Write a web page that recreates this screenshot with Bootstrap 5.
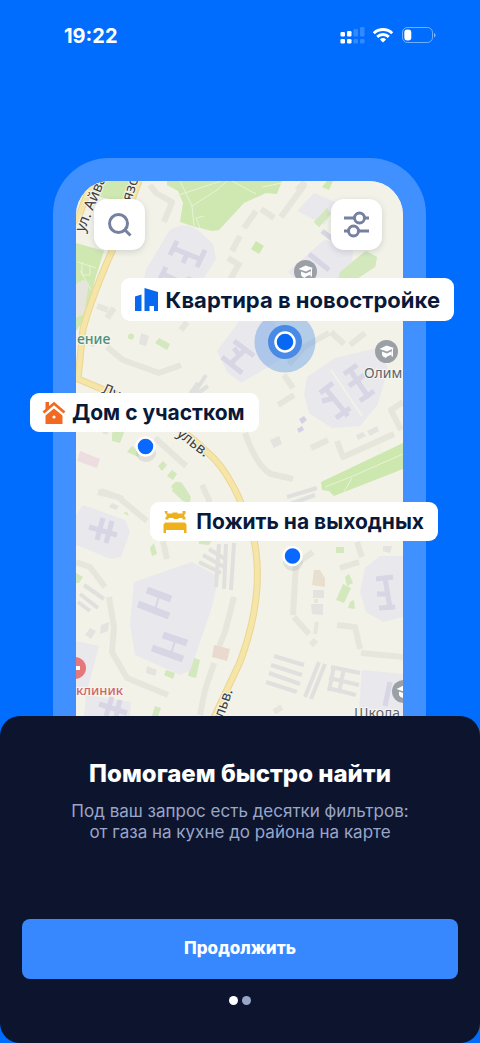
<!DOCTYPE html>
<html lang="ru">
<head>
<meta charset="utf-8">
<meta name="viewport" content="width=device-width, initial-scale=1">
<title>Помогаем быстро найти</title>
<link href="https://cdn.jsdelivr.net/npm/bootstrap@5.3.0/dist/css/bootstrap.min.css" rel="stylesheet">
<style>
  body { background: #006dff; font-family: Inter, "Noto Sans", sans-serif; }
  .status-bar { height: 158px; padding: 24px 44px 0 64px; color: #fff; }
  .status-time { font-size: 20px; line-height: 24px; }
  .stage { padding: 0 54px 0 53px; }
  .phone { background: #4090ff; border-radius: 56px 56px 0 0; padding: 23px 23px 0; }
  .map-screen { border-radius: 34px 34px 0 0; overflow: hidden; background: #f2f2e8; }
  .map-tools { top: 41px; left: 41px; right: 44px; }
  .tool-btn { width: 51px; height: 51px; border-radius: 13px; background: #fff; border: 0; box-shadow: 0 2px 6px rgba(60, 70, 90, .18); }
  .tag { background: #fff; color: #08193a; border-radius: 9px; height: 39px; font-size: 21px; line-height: 24px; font-weight: 700; white-space: nowrap; padding: 0 14px 0 12px; gap: 8px; }
  .tag-flat { top: 120px; right: -28px; height: 43px; font-size: 22px; gap: 6px; }
  .tag-house { top: 235px; left: -23px; gap: 6px; }
  .tag-weekend { top: 344px; right: -12px; }
  .sheet { background: #0d152e; border-radius: 20px; padding: 43px 22px 38px; }
  .sheet-title { font-size: 24px; line-height: 30px; font-weight: 800; color: #fff; margin-bottom: 12px; }
  .sheet-note { font-size: 17px; line-height: 21px; font-weight: 400; color: #9aa5c8; margin-bottom: 76px; }
  .next-btn { --bs-btn-color: #fff; --bs-btn-bg: #3787ff; --bs-btn-hover-color: #fff; --bs-btn-hover-bg: #2778f0; height: 60px; border-radius: 8px; font-size: 17px; font-weight: 800; }
  .dots { gap: 4px; margin-top: 17px; }
  .dot { width: 9px; height: 9px; border-radius: 50%; background: #9aa5c8; }
  .dot-on { background: #fff; }
</style>
</head>
<body class="min-vh-100 d-flex flex-column">

<header class="status-bar d-flex justify-content-between align-items-start">
  <div class="status-time fw-bold">19:22</div>
  <svg width="96" height="24" viewBox="340 24 96 24" aria-hidden="true">
    <g fill="#fff">
      <rect x="340.500" y="32" width="4.500" height="4.500" rx="1.300"/><rect x="347" y="31" width="4.500" height="5.500" rx="1.300"/>
      <rect x="340.500" y="39" width="4.500" height="4.500" rx="1.300"/><rect x="347" y="39" width="4.500" height="4.500" rx="1.300"/>
      <g opacity=".2"><rect x="353.500" y="29" width="4.500" height="7.500" rx="1.300"/><rect x="360" y="27" width="4.500" height="9.500" rx="1.300"/>
      <rect x="353.500" y="39" width="4.500" height="4.500" rx="1.300"/><rect x="360" y="39" width="4.500" height="4.500" rx="1.300"/></g>
    </g>
    <g fill="none" stroke="#fff" stroke-width="2.900">
      <path d="M373.800 33.200a13.200 13.200 0 0 1 18.400 0"/><path d="M377.200 36.900a8.300 8.300 0 0 1 11.600 0"/>
    </g>
    <path d="M383 42.600l-3.100-3.200a4.500 4.500 0 0 1 6.200 0z" fill="#fff"/>
    <rect x="402.500" y="27.500" width="30" height="15" rx="5" fill="none" stroke="#fff" stroke-opacity=".45"/>
    <path d="M434 33v4.500q1.500-.5 1.500-2.200T434 33z" fill="#fff" opacity=".5"/>
    <rect x="404.300" y="29.500" width="7" height="11" rx="3" fill="#fff"/>
  </svg>
</header>

<main class="flex-grow-1 d-flex flex-column">
  <section class="stage">
    <div class="phone position-relative">
      <div class="map-screen">
        <svg class="d-block w-100" viewBox="76 181 327 535" role="img" aria-label="Карта района">
          <rect x="76" y="181" width="327" height="535" fill="#f2f2e8"/>
          <!-- parks -->
          <g fill="#cfe8b2">
            <path d="M94 181h43l-9 22-28-6-14-6z"/>
            <path d="M76 243l28 8-8 25-11 43-9 12z"/>
            <path d="M167 181h115l-5 13-11-1-22 10-25 27-7 1-20-5-12-4 3-19-5-12-11-6z"/>
            <path d="M327 181l6 0-4 9-7-3zM314 222l13-14 4 6-12 13zM340 272l26-21 11 6-2 10-17 11-20 2zM256 241l8 5-5 8-8-5z"/>
          </g>
          <g fill="#d3e8bd">
            <path d="M155 343l4-5 11 6-3 6zM128 336a3 3 0 1 1 6 1 3 3 0 0 1-6-1zM112 434l2-7 11 3-5 13-8-2zM127 452l5-6 8 6-2 5zM158 466l5-5 4 4-5 6zM167 476l5-6 5 4-4 6zM171 487q4-8 11-4l9 14q-4 6-9 3z"/>
            <path d="M321 482l82-39v26l-69 27-5-5-7-1z" fill="#cde8ae"/>
            <path d="M171 490h10l10 9-2 4-6-2zM150 548l4-5 3 11-5 2zM199 540h13l-3 5-10-1zM195 582l13 4-3 7-12-3zM187 600q7-6 15-1 1 8-10 28-6 6-13-2-1-6 8-25zM192 657l8 3-4 18-8-2zM166 670l9 3-2 6-9-4zM155 706l6 2-3 8h-6zM76 573l7 4-4 6h-3zM123 513l4-1 2 4z"/>
            <path d="M336 547h8v6h-8zM345 577l4-3 4 9-6 3zM343 584l8 4-7 15-8-3zM350 602l4-2 1 9-7-1zM369 672l10 2-1 7-12-2zM365 684l11 2-3 21-11-2z"/>
          </g>
          <g fill="none" stroke="#e8f2d6" stroke-width="1">
            <path d="M180 181l12 25 2 20M176 196l45-15M192 206l25-16 10-9M232 181l24 13M200 228l-4-10 8-2M78 262l18 6M80 270l11 20M352 478l-8 14M325 487l28-11 50-22M382 454l-4-8M262 187l20-4"/>
            <path d="M82 262v13h8v-10M79 305l10 4"/>
          </g>
          <!-- school grounds -->
          <g fill="#e9e8ed">
            <path d="M169 231q15-11 30 0l14 13 3 15-22 34-53-3 5-20z"/>
            <path d="M314 193l24 10-14 22-27-14zM324 240l30 4-4 34-54 2-8-8z"/>
            <path d="M217 351l26-35 30 4 15 35-20 12-27 16-14-11z"/>
            <path d="M307 377l28-19 42-10 11 20-10 36-18 22-28 2-23-15-5-18z"/>
            <path d="M83 505l42 15 5 12-9 25-10 2-35-14v-30z"/>
            <path d="M134 582l58-20 27 15-8 33-21 61-10 4-45-20-5-30z"/>
            <path d="M365 568l15-12h23v61l-20 5-17-10-6-20z"/>
            <path d="M76 641l23 5-12 45-11 2zM86 695l45 7-1 14H84zM362 670l41 4v42l-44-7z"/>
          </g>
          <path d="M314 222l13-14 4 6-12 13z" fill="#d3e8bd"/>
          <path d="M340 272l26-21 11 6-2 10-17 11-20 2z" fill="#d3e8bd"/>
          <path d="M83 280l6 3-5 31-8 4v-34z" fill="#e6e5dd"/>
          <path d="M331 370l31 46" stroke="#f2f2e8" stroke-width="2"/>
          <!-- blocks of flats -->
          <g fill="none" stroke="#e7e6dc" stroke-width="6" stroke-linejoin="round">
            <path d="M150 185l6 8 16 9-8 20M256 211l-12 17M261 209l13 9M305 184l-24 33M297 190l8-8M240 236l-8 15M228 258l8 5M240 262l-10 18M215 305l10 12"/>
            <path d="M107 347l16 13 36 13 22-8M155 438l31 28M181 330l6-8M97 306l11 4M114 308l-7 10"/>
            <path d="M289 364l15-17 25-14M331 332l13 12M350 345l15-12M284 375l9 13M278 405l16-10M245 433q12 34 26 41l22 5M311 448l17-8M337 441l6 16 51-23M403 402l-12 8 10 20"/>
            <path d="M101 491l22 8M202 485l7 15-2 14M98 492l20 5 29 24M76 562l14 5 15 20M109 597l5 30-2 25 15 26 41 17M163 541l4 18M234 597l-9 35-6 15M214 663l-9 27-5 25"/>
            <path d="M313 552l-17 12-3 51M294 617l15 17M357 542l5 15M340 568l19-6M337 625l18 2 5 22M361 653l42 4M311 645l5-5M274 712l8-5"/>
            <path d="M316 599v4M317 622l-2 12" stroke-width="4"/>
          </g>
          <g fill="#e4e3e0">
            <path d="M313 590h11v8h-11zM311 604h12v11l-11-1zM141 333l8 3-3 10-7-2zM270 440l9-4 3 8-8 4zM356 435l7-3 3 4-8 4zM367 431l10-5 2 5-9 5zM101 625l8-3-1 9-8 3zM90 628l6 3-5 8-6-4z"/>
            <path d="M112 503l7 3-3 4-7-3zM147 666l10 4-2 6-9-3zM383 546h9l-2 7-7-2zM91 342l4 1-1 4-4-1zM105 427l4 2-2 6-5-2z"/>
          </g>
          <g fill="none" stroke="#e0e0de" stroke-width="4">
            <path d="M274 656l30 9M271 665l31 10M269 673l31 11M266 682l31 10M319 662l-14 35M325 664l-14 35M331 667l29 6M329 678l30 7M328 688l28 7M334 666l-5 25M344 668l-5 25"/>
            <path d="M219 544l-3 43M226 544l-2 45M234 543l-3 47M199 562l22 11M203 555l23 13M209 549l16 10M198 383l-10 14M206 375l-13 20M208 386l-14 10M287 497l30-9M290 504l25-9M84 585l20 14M80 594l18 14M78 602l12 9"/>
          </g>
          <path d="M314 570h6l5 8v9l-13-2z" fill="#e9dfcf"/>
          <path d="M214 645l16 4-3 12-15-4z" fill="#ead9cf"/>
          <path d="M80 451l20 8-3 9-20-7z" fill="#eedde0"/>
          <path d="M299 419l5-3 3 4-5 4zM297 429l5-3 2 4-5 3z" fill="#d5d1e4"/>
          <!-- school buildings -->
          <g fill="none" stroke="#d8d5e4" stroke-width="5">
            <path d="M177 241l-7 14M173 248l29 12M205 250l-8 17M187 254l-4 9M166 267l-8 16M163 274l24 11M190 277l-6 12"/>
            <path d="M322 231l12 9M309 254l20 16M296 270l10 8"/>
            <path d="M234 341l20 15M222 357l20 16M230 364l16-15M240 356l-6-8"/>
            <path d="M320 393l13-10M326 389l22 27M322 401l13-3M336 418l14-10M344 374l13-9M350 370l19 28M360 401l14-10M349 386l15-11"/>
            <path d="M89 527l28 8M103 518l-6 22M112 521l-6 22"/>
            <path d="M376 579l17-2M385 578l5 30M377 594h10M379 608l16-1M99 704l28 9M112 697l-6 19M120 700l-4 16M390 682l-5 24"/>
          </g>
          <g fill="none" stroke="#d8d5e4" stroke-width="7">
            <path d="M147 590l24 9M138 604l31 12M163 635l24 8M152 648l31 11"/>
            <path d="M159 596l-4 14M175 641l-5 16" stroke-width="2"/>
          </g>
          <!-- roads -->
          <g fill="none" stroke-linejoin="round">
            <path d="M139 181l-27 70q-20 45-29 78l-5 50 24 10c43 15 82 40 105 63 21 17 34 49 44 75q17 60-11 135l-30 64M92 181l-16 43" stroke="#ecd595" stroke-width="7"/>
            <path d="M139 181l-27 70q-20 45-29 78l-5 50 24 10c43 15 82 40 105 63 21 17 34 49 44 75q17 60-11 135l-30 64M92 181l-16 43" stroke="#f5e5a6" stroke-width="5"/>
          </g>
          <!-- labels -->
          <g font-family="'Noto Sans', sans-serif" font-size="15" fill="#3f4042" stroke="#f6f6ee" stroke-width="2" paint-order="stroke">
            <text transform="translate(84 233) rotate(-68)">ул. Айвазо</text>
            <text transform="translate(131 202) rotate(-72)">язо</text>
            <text transform="translate(101 393) rotate(22)">Лу</text>
            <text transform="translate(176 435) rotate(38)">ульв.</text>
            <text transform="translate(221 725) rotate(-71)">ульв.</text>
            <text x="77" y="344" font-size="14" font-weight="500" fill="#4c8f80">ение</text>
            <text x="76" y="695" font-size="13" font-weight="500" fill="#cf6468">клиник</text>
            <text x="364" y="378" font-size="14" fill="#5f646b">Олим</text>
            <text x="354" y="718" font-size="14" fill="#5f646b">Школа</text>
          </g>
          <circle cx="75" cy="668" r="11" fill="#e4787b"/><path d="M76 666h4v4h-4z" fill="#fff"/>
          <g id="school">
            <circle cx="305.500" cy="271.500" r="11.500" fill="#9ba0a6"/>
            <path d="M298.500 269l7-3.500 7.500 2.500-7 3.500zM301 271.500l5 2 4.500-2.200v3.700q-5 1-5.500 3-3.500-1-4-3zM311 269l1-.5v8h-1.500z" fill="#fff"/>
          </g>
          <use href="#school" x="81" y="80"/>
          <use href="#school" x="98" y="420"/>
          <!-- pins -->
          <circle cx="285" cy="342" r="30.500" fill="#4b8de4" fill-opacity=".38"/>
          <circle cx="285" cy="342" r="17" fill="#488ae6"/>
          <circle cx="285" cy="342" r="9.500" fill="#0868f4" stroke="#fff" stroke-width="2.500"/>
          <g>
            <ellipse cx="146" cy="453" rx="10" ry="9" fill="#39465a" opacity=".10"/><circle cx="145.500" cy="446.500" r="9" fill="#0868ff" stroke="#fff" stroke-width="2.500"/>
            <ellipse cx="293" cy="562" rx="10" ry="9" fill="#39465a" opacity=".10"/><circle cx="292.500" cy="556" r="9" fill="#0868ff" stroke="#fff" stroke-width="2.500"/>
          </g>
        </svg>
      </div>

      <div class="map-tools position-absolute d-flex justify-content-between">
        <button type="button" class="tool-btn d-flex align-items-center justify-content-center p-0" aria-label="Поиск">
          <svg width="27" height="27" viewBox="0 0 27 27" fill="none" stroke="#76819f" stroke-width="3"><circle cx="12.500" cy="12.500" r="9"/><path d="M18.500 18.500l6 6"/></svg>
        </button>
        <button type="button" class="tool-btn d-flex align-items-center justify-content-center p-0" aria-label="Фильтры">
          <svg width="27" height="27" viewBox="0 0 27 27" fill="none" stroke="#76819f" stroke-width="3"><path d="M1 7h10M22 7h4M1 20h4M16 20h10"/><circle cx="16.500" cy="7" r="5"/><circle cx="10.500" cy="20" r="5"/></svg>
        </button>
      </div>

      <div class="tag tag-flat position-absolute d-flex align-items-center">
        <svg width="27" height="26" viewBox="0 0 27 26" fill="#0868f0" aria-hidden="true"><path d="M2 9.500L8.500 7.500V24H2zM11.500 1L25 5v19h-4v-5h-4.500v5h-5z"/></svg>
        <span>Квартира в новостройке</span>
      </div>
      <div class="tag tag-house position-absolute d-flex align-items-center">
        <svg width="24" height="26" viewBox="0 0 24 26" aria-hidden="true"><path d="M1.500 12.500L12 3.500l10.500 9" fill="none" stroke="#f26a21" stroke-width="2.800"/><path d="M3.500 2H7v5l-3.500 3zM12 8.500l8.500 7V24h-17v-8.500z" fill="#f26a21"/><circle cx="12" cy="17" r="1.600" fill="#fff"/></svg>
        <span>Дом с участком</span>
      </div>
      <div class="tag tag-weekend position-absolute d-flex align-items-center">
        <svg width="26" height="26" viewBox="0 0 26 26" fill="#efb11b" aria-hidden="true"><path d="M2.500 2h3v2.500h5V3.500h5v1h5V2h3v3h-1v3h1v2.500h-3V9h-4v1h-5V9h-5v1.500h-3V8h1V5h-1zM3 13.500h20l1.500 2V24H22v-3H4v3H1.500v-8.500z"/></svg>
        <span>Пожить на выходных</span>
      </div>
    </div>
  </section>

  <section class="sheet mt-auto text-center">
    <h1 class="sheet-title">Помогаем быстро найти</h1>
    <p class="sheet-note">Под ваш запрос есть десятки фильтров:<br>от газа на кухне до района на карте</p>
    <button type="button" class="btn next-btn w-100">Продолжить</button>
    <div class="dots d-flex justify-content-center">
      <span class="dot dot-on"></span>
      <span class="dot"></span>
    </div>
  </section>
</main>

<script src="https://cdn.jsdelivr.net/npm/bootstrap@5.3.0/dist/js/bootstrap.bundle.min.js"></script>
</body>
</html>
